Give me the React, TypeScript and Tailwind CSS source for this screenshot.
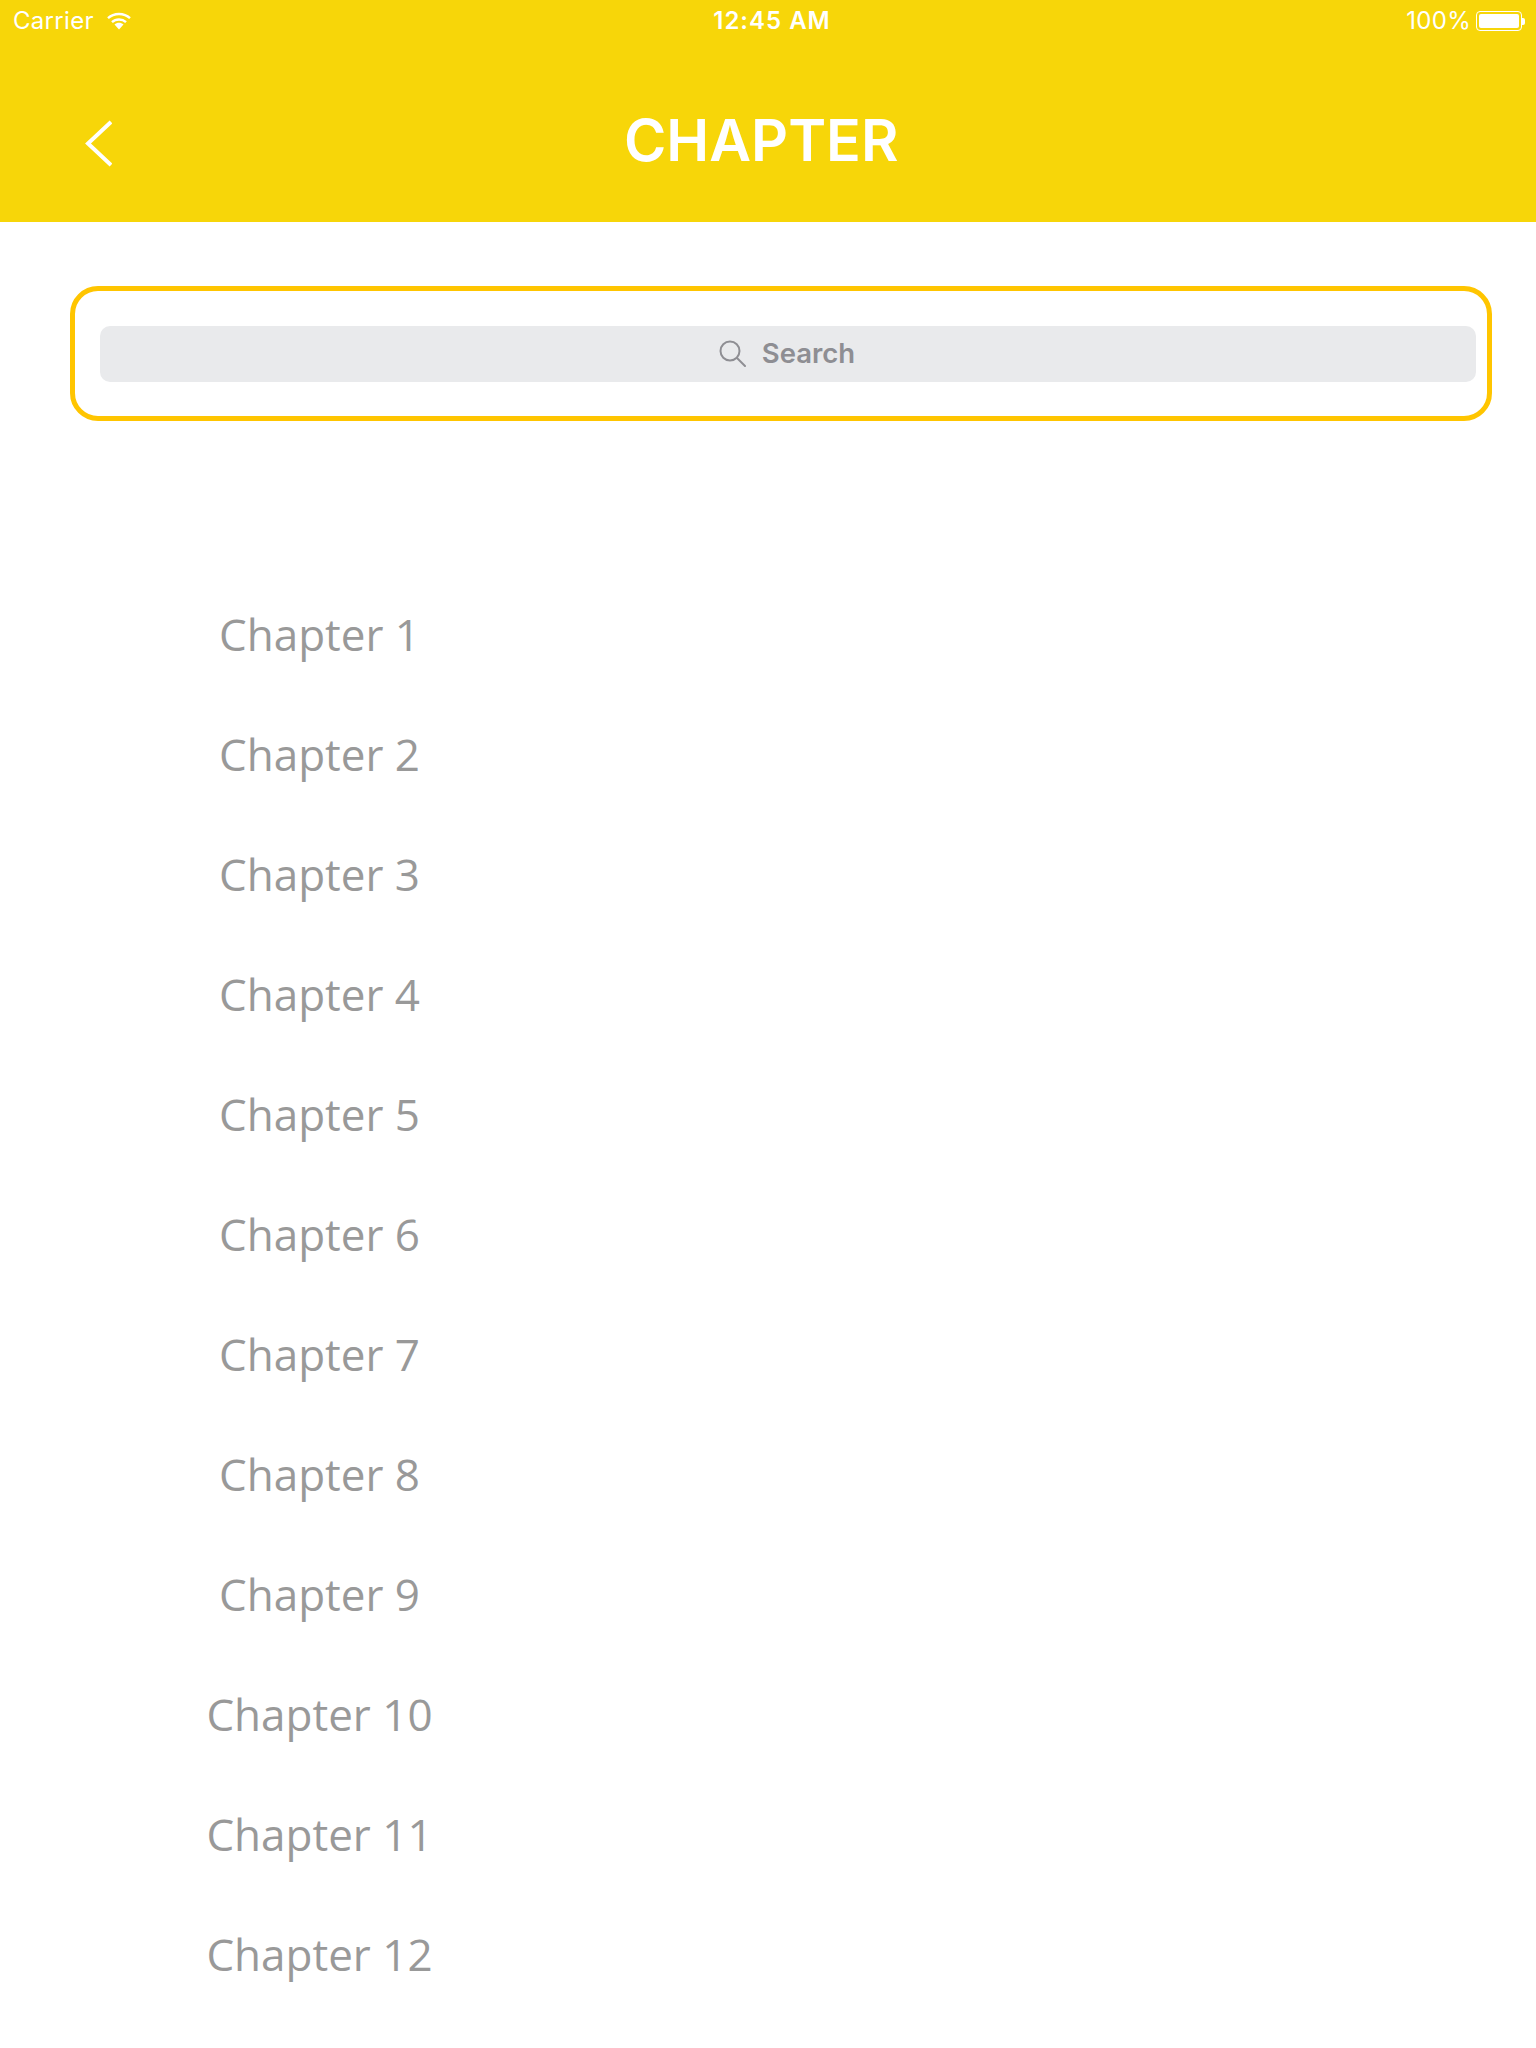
import React from 'react';

const chapters = Array.from({ length: 12 }, (_, i) => `Chapter ${i + 1}`);

function WifiIcon() {
  return (
    <svg width="24" height="18" viewBox="0 0 24 18" fill="none" stroke="white" strokeWidth="2.4">
      <path d="M1 6.2C7 0.6 17 0.6 23 6.2" />
      <path d="M5 10.2C8.8 6.6 15.2 6.6 19 10.2" />
      <path d="M7.5 12.4L12 17.6L16.5 12.4C14 10.2 10 10.2 7.5 12.4Z" fill="white" stroke="none" />
    </svg>
  );
}

function BatteryIcon() {
  return (
    <div className="flex items-center">
      <div className="w-[46px] h-[20px] rounded-[4px] border border-white p-[2px]">
        <div className="w-full h-full rounded-[2px] bg-white" />
      </div>
      <div className="w-[3px] h-[7px] rounded-r-[2px] bg-white" />
    </div>
  );
}

function StatusBar() {
  return (
    <div className="grid grid-cols-3 items-center h-[42px] pl-[13px] pr-[11px] text-white text-[24px] tracking-[0.3px] font-['Inter',sans-serif]">
      <div className="flex items-center gap-[13px]">
        <span>Carrier</span>
        <WifiIcon />
      </div>
      <div className="text-center font-semibold tracking-[1px] pl-[6px]">12:45 AM</div>
      <div className="flex items-center justify-end gap-[5px]">
        <span>100%</span>
        <BatteryIcon />
      </div>
    </div>
  );
}

function Header() {
  return (
    <div className="h-[222px] bg-[#f7d609]">
      <StatusBar />
      <div className="flex items-center h-[102px] mt-[48px] pl-[84px]">
        <svg className="mt-[5px]" width="28" height="47" viewBox="0 0 28 47" fill="none" stroke="white" strokeWidth="4">
          <path d="M27 2L4 23.5L27 45" />
        </svg>
        <h1 className="ml-[512px] text-white text-[57.5px] font-semibold font-['Inter',sans-serif] leading-none">CHAPTER</h1>
      </div>
    </div>
  );
}

function SearchBox() {
  return (
    <div className="ml-[70px] mr-[44px] mt-[64px] h-[135px] rounded-[28px] border-[5px] border-[#ffc500] flex items-center pl-[25px] pr-[11px]">
      <div className="w-full h-[56px] pr-[2px] rounded-[10px] bg-[#e9eaec] flex items-center justify-center gap-[16px] text-[#8e8e93]">
        <svg width="27" height="27" viewBox="0 0 27 27" fill="none" stroke="currentColor" strokeWidth="2">
          <circle cx="11" cy="11" r="9.5" />
          <path d="M18 18L26 26" strokeLinecap="round" />
        </svg>
        <span className="text-[27.5px] font-semibold font-['Inter',sans-serif]">Search</span>
      </div>
    </div>
  );
}

export default function App() {
  return (
    <div className="w-[1536px] h-[2048px] bg-white overflow-hidden">
      <Header />
      <SearchBox />
      <ul className="mt-[153px] w-[639px] font-['Open_Sans',sans-serif] text-[44px] text-[#999999]">
        {chapters.map((c) => (
          <li key={c} className="h-[120px] flex items-center justify-center">
            {c}
          </li>
        ))}
      </ul>
    </div>
  );
}
